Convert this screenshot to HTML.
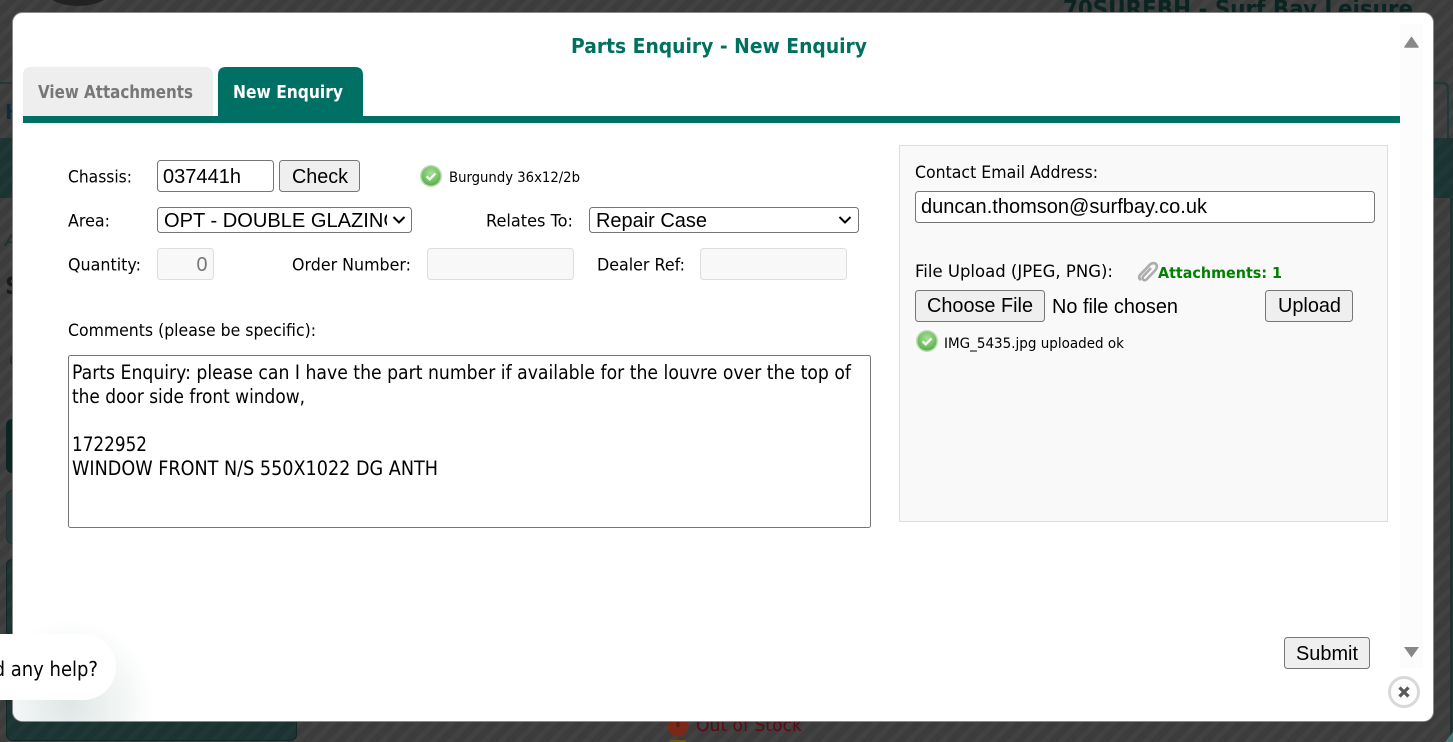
<!DOCTYPE html>
<html><head><meta charset="utf-8"><title>Parts Enquiry</title>
<style>
html,body{margin:0;padding:0;background:#3c3c3c;overflow:hidden}
svg{display:block}
text{font-family:"DejaVu Sans",Tahoma,sans-serif;fill:#000}
.t{font-size:17px}
.s{font-size:14.500px}
.a{font-size:19.500px}
.c{font-size:20px;font-family:"Liberation Sans",Arial,sans-serif}
.b{font-weight:bold}
</style></head><body>
<svg xmlns="http://www.w3.org/2000/svg" width="1453" height="742" viewBox="0 0 1453 742">
<defs>
<pattern id="st" width="12" height="12" patternUnits="userSpaceOnUse" patternTransform="rotate(45)">
<rect width="12" height="12" fill="#3c3c3c"/><rect width="5" height="12" fill="#424242"/>
</pattern>
<pattern id="sg" width="12" height="12" patternUnits="userSpaceOnUse" patternTransform="rotate(45)">
<rect width="12" height="12" fill="#1b3331"/><rect width="5" height="12" fill="#1f3837"/>
</pattern>
<radialGradient id="ok" cx="50%" cy="35%" r="65%"><stop offset="0" stop-color="#a9dc98"/><stop offset=".75" stop-color="#6fbd60"/><stop offset="1" stop-color="#5ba851"/></radialGradient>
<radialGradient id="sh" gradientUnits="userSpaceOnUse" cx="70" cy="705" r="85"><stop offset="0" stop-color="#c4d2d0" stop-opacity=".55"/><stop offset="1" stop-color="#c4d2d0" stop-opacity="0"/></radialGradient>
<clipPath id="c1"><rect x="160" y="208" width="227" height="24"/></clipPath>
<clipPath id="cm"><rect x="13" y="13" width="1420" height="708" rx="10"/></clipPath>
<g id="okic"><circle r="11" fill="#b9dcb1"/><circle r="9.500" fill="url(#ok)"/><path d="M-4.500 0.300L-1.300 3.300L4.500-2.600" fill="none" stroke="#eef8ea" stroke-width="2.400"/></g>
</defs>
<!-- page behind overlay -->
<rect width="1453" height="742" fill="url(#st)"/>
<ellipse cx="78" cy="-14" rx="36" ry="20" fill="#222"/>
<text x="1063" y="17" style="fill:#0a2422;font-size:24px;font-weight:bold" textLength="350" lengthAdjust="spacingAndGlyphs">70SURFBH - Surf Bay Leisure</text>
<rect y="82" width="13" height="2" fill="#1f3a38"/>
<path d="M1433 82h10q6 0 6 6v50h-2V90q0-6-6-6h-8z" fill="#1f3a38"/>
<text x="5" y="119" style="fill:#0e2c3c;font-size:20px;font-weight:bold">H</text>
<rect y="138" width="1453" height="60" fill="url(#sg)"/>
<text x="5" y="246" style="fill:#17302f;font-size:16px;font-style:italic">A</text>
<text x="5" y="294" style="fill:#1a1a1a;font-size:24px;font-weight:bold">S</text>
<text x="9" y="366" style="fill:#2a2422;font-size:16px">C</text>
<rect x="1450" y="198" width="3" height="544" fill="#1b3331"/>
<rect x="6" y="419" width="40" height="54" rx="6" fill="#0a2623"/>
<rect x="6.500" y="490.500" width="40" height="53" rx="6" fill="#26383a" stroke="#1b3331"/>
<rect x="6.500" y="559.500" width="290" height="181" rx="6" fill="url(#sg)" stroke="#0f2725"/>
<text x="696" y="731" style="fill:#5a0a12;font-size:18px" textLength="106" lengthAdjust="spacingAndGlyphs">Out of Stock</text>
<circle cx="678" cy="726" r="10.500" fill="#7c2818"/>
<rect x="676.500" y="717" width="3" height="10" fill="#5a1a10"/>
<rect x="670" y="740" width="16" height="2" fill="#6a5a10"/>
<path d="M1445 742l8-10v10z" fill="#4d7a76"/>

<!-- modal -->
<rect x="12.500" y="12.500" width="1421" height="709" rx="10" fill="#fff" stroke="#8a8a8a"/>
<rect x="13" y="13" width="1420" height="708" rx="10" fill="#fff"/>
<rect x="1400" y="24" width="23" height="644" fill="#fcfcfc"/>
<path d="M1411.500 37.500L1418 47H1405z" fill="#888" stroke="#888" stroke-width="1.500" stroke-linejoin="round"/>
<path d="M1404 647h15l-7.500 10.500z" fill="#888"/>

<text class="b" x="571" y="53" style="fill:#00705f;font-size:20px" textLength="296" lengthAdjust="spacingAndGlyphs">Parts Enquiry - New Enquiry</text>

<path d="M23 116V75q0-8 8-8h174q8 0 8 8v41z" fill="#eee"/>
<path d="M218 116V75q0-8 8-8h129q8 0 8 8v41z" fill="#007065"/>
<rect x="23" y="116" width="1377" height="7" fill="#007065"/>
<text class="b" x="38" y="98" style="fill:#777;font-size:18px" textLength="155" lengthAdjust="spacingAndGlyphs">View Attachments</text>
<text class="b" x="233" y="98" style="fill:#fff;font-size:18px" textLength="110" lengthAdjust="spacingAndGlyphs">New Enquiry</text>

<!-- left form -->
<text class="t" x="68" y="182.500" textLength="64" lengthAdjust="spacingAndGlyphs">Chassis:</text>
<rect x="157.500" y="160.500" width="116" height="31" rx="3" fill="#fff" stroke="#767676"/>
<text class="c" x="163" y="183" textLength="78" lengthAdjust="spacingAndGlyphs">037441h</text>
<rect x="279.500" y="160.500" width="80" height="31" rx="3" fill="#efefef" stroke="#767676"/>
<text class="c" x="292" y="183" textLength="56" lengthAdjust="spacingAndGlyphs">Check</text>
<use href="#okic" x="431" y="176"/>
<text class="s" x="449" y="182" textLength="131" lengthAdjust="spacingAndGlyphs">Burgundy 36x12/2b</text>

<text class="t" x="68" y="226.500" textLength="42" lengthAdjust="spacingAndGlyphs">Area:</text>
<rect x="157.500" y="207.500" width="254" height="25" rx="3" fill="#fff" stroke="#767676"/>
<g clip-path="url(#c1)"><text class="c" x="164" y="227" textLength="235" lengthAdjust="spacingAndGlyphs">OPT - DOUBLE GLAZING</text></g>
<path d="M393.500 217l5.500 5.500 5.500-5.500" fill="none" stroke="#000" stroke-width="2"/>
<text class="t" x="486" y="226.500" textLength="87" lengthAdjust="spacingAndGlyphs">Relates To:</text>
<rect x="589.500" y="207.500" width="269" height="25" rx="3" fill="#fff" stroke="#767676"/>
<text class="c" x="596" y="227" textLength="111" lengthAdjust="spacingAndGlyphs">Repair Case</text>
<path d="M839.500 217l5.500 5.500 5.500-5.500" fill="none" stroke="#000" stroke-width="2"/>

<text class="t" x="68" y="270.500" textLength="73" lengthAdjust="spacingAndGlyphs">Quantity:</text>
<rect x="157.500" y="248.500" width="56" height="31" rx="3" fill="#f8f8f8" stroke="#ddd"/>
<text class="c" x="196.500" y="271" style="fill:#777" textLength="11" lengthAdjust="spacingAndGlyphs">0</text>
<text class="t" x="292" y="270.500" textLength="119" lengthAdjust="spacingAndGlyphs">Order Number:</text>
<rect x="427.500" y="248.500" width="146" height="31" rx="3" fill="#f8f8f8" stroke="#ddd"/>
<text class="t" x="597" y="270.500" textLength="88" lengthAdjust="spacingAndGlyphs">Dealer Ref:</text>
<rect x="700.500" y="248.500" width="146" height="31" rx="3" fill="#f8f8f8" stroke="#ddd"/>

<text class="t" x="68" y="336" textLength="248" lengthAdjust="spacingAndGlyphs">Comments (please be specific):</text>
<rect x="68.500" y="355.500" width="802" height="172" rx="2" fill="#fff" stroke="#767676"/>
<text class="a" x="72" y="379" textLength="779" lengthAdjust="spacingAndGlyphs">Parts Enquiry: please can I have the part number if available for the louvre over the top of</text>
<text class="a" x="72" y="403" textLength="233" lengthAdjust="spacingAndGlyphs">the door side front window,</text>
<text class="a" x="72" y="451" textLength="75" lengthAdjust="spacingAndGlyphs">1722952</text>
<text class="a" x="72" y="475" textLength="366" lengthAdjust="spacingAndGlyphs">WINDOW FRONT N/S 550X1022 DG ANTH</text>

<!-- right panel -->
<rect x="899.500" y="145.500" width="488" height="376" fill="#f9f9f9" stroke="#ddd"/>
<text class="t" x="915" y="178" textLength="183" lengthAdjust="spacingAndGlyphs">Contact Email Address:</text>
<rect x="915.500" y="191.500" width="459" height="31" rx="3" fill="#fff" stroke="#767676"/>
<text class="c" x="921" y="213" textLength="286" lengthAdjust="spacingAndGlyphs">duncan.thomson@surfbay.co.uk</text>
<text class="t" x="915" y="277" textLength="198" lengthAdjust="spacingAndGlyphs">File Upload (JPEG, PNG):</text>
<path d="M1141 280q-3-2-1-5l10-10.500q3-2.500 6-.5 2 3-.5 6l-9 9.500q-2 1.500-3.500 0-1-2 .5-3.500l7.500-8" fill="none" stroke="#adadad" stroke-width="2.600"/>
<text class="b" x="1158" y="278" style="fill:#008000;font-size:15px" textLength="124" lengthAdjust="spacingAndGlyphs">Attachments: 1</text>
<rect x="915.500" y="290.500" width="129" height="31" rx="3" fill="#efefef" stroke="#767676"/>
<text class="c" x="927" y="312" textLength="106" lengthAdjust="spacingAndGlyphs">Choose File</text>
<text class="c" x="1052" y="313" textLength="126" lengthAdjust="spacingAndGlyphs">No file chosen</text>
<rect x="1265.500" y="290.500" width="87" height="31" rx="3" fill="#efefef" stroke="#767676"/>
<text class="c" x="1278" y="312" textLength="63" lengthAdjust="spacingAndGlyphs">Upload</text>
<use href="#okic" x="927" y="341"/>
<text class="s" x="944" y="348" textLength="180" lengthAdjust="spacingAndGlyphs">IMG_5435.jpg uploaded ok</text>

<rect x="1284.500" y="637.500" width="85" height="31" rx="3" fill="#efefef" stroke="#767676"/>
<text class="c" x="1296" y="660" textLength="62" lengthAdjust="spacingAndGlyphs">Submit</text>
<circle cx="1404" cy="692" r="14.500" fill="#fff" stroke="#d9d9d9" stroke-width="3"/>
<path d="M1399.500 687.500l9 9m0-9l-9 9" fill="none" stroke="#5a5a5a" stroke-width="3.200"/>

<!-- chat bubble -->
<g clip-path="url(#cm)"><rect x="13" y="610" width="160" height="111" fill="url(#sh)"/></g>
<path d="M0 634H83a33 33 0 0 1 0 66H0z" fill="#fff"/>
<text x="-42" y="676" style="font-size:20px" textLength="140" lengthAdjust="spacingAndGlyphs">Need any help?</text>
</svg>
</body></html>
